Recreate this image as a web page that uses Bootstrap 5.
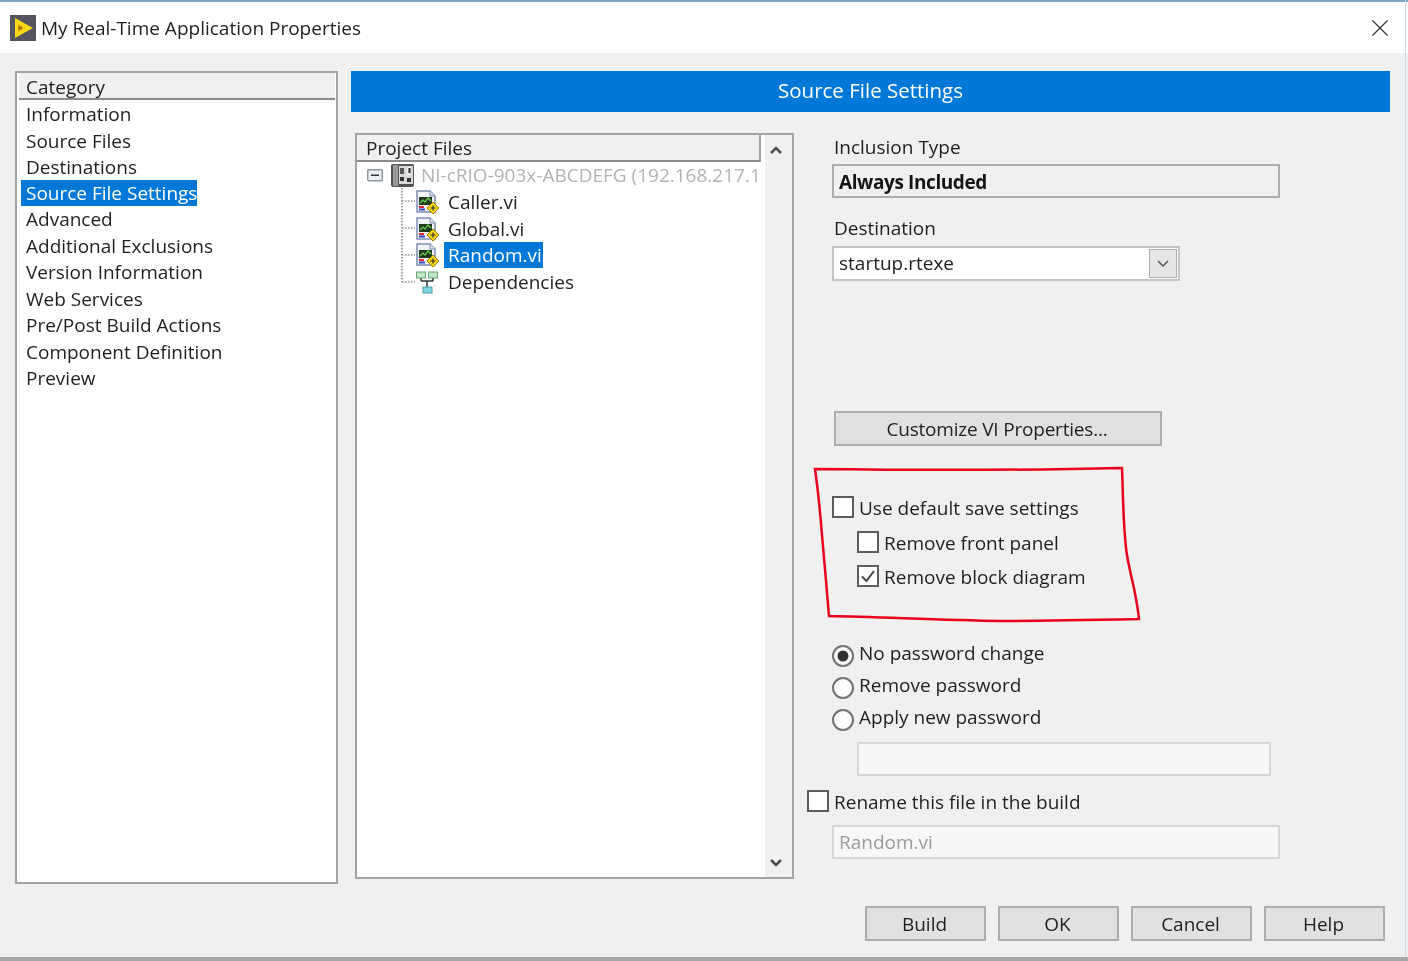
<!DOCTYPE html>
<html lang="en">
<head>
<meta charset="utf-8">
<title>My Real-Time Application Properties</title>
<link href="https://cdn.jsdelivr.net/npm/bootstrap@5.3.0/dist/css/bootstrap.min.css" rel="stylesheet">
<style>
html,body{height:961px;overflow:hidden}
html{background:#f0f0f0}
body{background:#f0f0f0;font-family:"Open Sans","Noto Sans",sans-serif;font-size:19px;line-height:24px;color:#1f1f1f;position:relative;filter:blur(.4px)}
.top-edge{height:2px;background:#7aa7c7}
.title-bar{height:51px;background:#fff;padding-left:10px;padding-right:20px}
.title-bar .ttl{font-size:19px;margin-left:5px}
.app-logo{width:26px;height:26px;flex:none}
.close-x{width:16px;height:16px}
.dlg-main{padding:18px 18px 0 15px;gap:13px}
.cat-list{width:323px;height:813px;background:#fff;border:2px solid #a3a3a3;padding:0 1px 0 2px;border-radius:0;flex:none}
.cat-head{height:27px;background:#f0f0f0;border-bottom:2px solid #8c8c8c;padding-left:7px;line-height:28px;margin:0 0 1px 0}
.cat-list .list-group-item{border:0;background:transparent;padding:0 0 0 7px;height:26.55px;line-height:26.5px;color:#1f1f1f}
.cat-list .list-group-item.active{background:#0078d7;color:#fff;width:176px;margin-left:2px;padding-left:5px;padding-right:0;white-space:nowrap}
.right-col{width:1039px;flex:none}
.blue-head{height:41px;background:#0078d7;color:#fff;font-size:20.500px;padding-bottom:3px}
.panels{margin-top:21px;padding-left:4px}
.tree-box{width:439px;height:746px;background:#fff;border:2px solid #a3a3a3;flex:none}
.tree-main{width:408px;flex:none}
.tree-head{height:27px;background:#f0f0f0;border-bottom:2px solid #8c8c8c;border-right:2px solid #a3a3a3;padding-left:9px;line-height:26px;width:404px}
.tree-rows{position:relative;padding-top:0}
.t-row{height:26.7px;white-space:nowrap;overflow:hidden;width:404px}
.t-root{padding-left:10px;color:#b3b3b3}
.t-child{padding-left:58px}
.t-child svg,.t-root svg{flex:none}
.t-txt{padding:0 1px 0 4px;margin-left:5px;height:26px;line-height:26px}
.t-root .t-txt{margin-left:3px;padding-left:3px}
.t-sel{background:#0078d7;color:#fff}
.t-exp{width:16px;height:16px;margin-right:7px;flex:none}
.t-dots{position:absolute;left:44px;top:26px;width:16px;height:97px;pointer-events:none}
.scroll-col{flex:1;background:#f0f0f0;padding:10px 6px 9px 0}
.scroll-col svg{width:14px;height:10px}
.form-col{margin-left:13px;width:500px}
.sm-label{height:24px;padding-left:27px}
.ro-box{width:448px;height:34px;margin-left:25px;border:2px solid #adadad;padding:0 0 0 5px;font-weight:700;line-height:32px;color:#141414;letter-spacing:-.4px}
.sel-box{width:348px;height:35px;margin-left:25px;background:#fff;border:2px solid #c4c4c4;padding:0 1px 0 5px;line-height:31px}
.sel-drop{width:28px;height:29px;background:#e6e6e6;border:1px solid #adadad}
.gray-btn{background:#e1e1e1;border:2px solid #adadad;border-radius:0;color:#1f1f1f;font-size:19px;line-height:24px;padding:0 2px 0 0}
.gray-btn:hover{background:#e1e1e1;border-color:#adadad;color:#1f1f1f}
.cust-btn{width:328px;height:35px;margin-left:27px;letter-spacing:-.2px}
.opt-row{height:24px;margin-bottom:0;white-space:nowrap}
.opt-txt{margin-top:2px}
.opt-row .form-check-input{width:22px;height:22px;margin:0 5px 0 0;border:2px solid #5c5c5c;border-radius:0;background-color:#fff;flex:none;box-shadow:none}
.opt-row .form-check-input:checked{background-color:#fff;border-color:#5c5c5c;background-image:url("data:image/svg+xml,%3Csvg xmlns='http://www.w3.org/2000/svg' viewBox='0 0 18 18'%3E%3Cpath d='M3 9.500l4.500 4.500 7.500-10' fill='none' stroke='%23444' stroke-width='2'/%3E%3C/svg%3E");background-size:100% 100%}
.opt-row .form-check-input[type=radio]{border-radius:50%;border-color:#707070;margin-top:6px}
.opt-row .form-check-input[type=radio]:checked{background-image:url("data:image/svg+xml,%3Csvg xmlns='http://www.w3.org/2000/svg' viewBox='0 0 18 18'%3E%3Ccircle cx='9' cy='9' r='5.500' fill='%23333'/%3E%3C/svg%3E")}
.lv1{margin-left:25px}
.lv2{margin-left:50px}
.lv0{margin-left:0}
.dis-input.form-control{background:#f7f7f7;border:2px solid #d6d6d6;border-radius:0;height:34px;padding:0 5px;font-size:19px;color:#9a9a9a;line-height:24px;box-shadow:none}
.pw-input{width:414px;margin-left:50px}
.name-input{width:448px;margin-left:25px}
.mt-2px{margin-top:2px}.mt-5px{margin-top:5px}.mt-18px{margin-top:18px}.mt-6px{margin-top:6px}.mt-130px{margin-top:130px}.mt-49px{margin-top:49px}.mt-11px{margin-top:11px}.mt-10px{margin-top:10px}.mt-53px{margin-top:53px}.mt-8px{margin-top:8px}.mt-12px{margin-top:12px}.mt-13px{margin-top:13px}
.dlg-foot{margin-top:22px;padding-right:23px;gap:12px}
.foot-btn{width:121px;height:35px}
.bottom-edge{position:absolute;left:0;right:0;top:957px;height:4px;background:#a6a6a6}
.right-edge{position:absolute;top:0;bottom:4px;right:2px;width:1px;background:#c9dbe8}
.redmark{position:absolute;left:0;top:0;width:1408px;height:961px;pointer-events:none}
</style>
</head>
<body>
<div class="top-edge"></div>
<div class="title-bar d-flex align-items-center justify-content-between">
  <div class="d-flex align-items-center">
    <svg class="app-logo" viewBox="0 0 26 26"><rect width="26" height="26" fill="#55555f"/><path d="M5 3l18 10-18 10z" fill="#f7d916"/><path d="M8 9v8l6-4z" fill="#e2a712"/><circle cx="10" cy="13" r="2" fill="#a8761a"/></svg>
    <span class="ttl">My Real-Time Application Properties</span>
  </div>
  <svg class="close-x" viewBox="0 0 16 16"><path d="M.5.5l15 15M15.500.5l-15 15" stroke="#333" stroke-width="1.200" fill="none"/></svg>
</div>
<div class="dlg-main d-flex">
  <div class="cat-list">
    <div class="cat-head">Category</div>
    <div class="list-group list-group-flush">
      <div class="list-group-item">Information</div>
      <div class="list-group-item">Source Files</div>
      <div class="list-group-item">Destinations</div>
      <div class="list-group-item active">Source File Settings</div>
      <div class="list-group-item">Advanced</div>
      <div class="list-group-item">Additional Exclusions</div>
      <div class="list-group-item">Version Information</div>
      <div class="list-group-item">Web Services</div>
      <div class="list-group-item">Pre/Post Build Actions</div>
      <div class="list-group-item">Component Definition</div>
      <div class="list-group-item">Preview</div>
    </div>
  </div>
  <div class="right-col">
    <div class="blue-head d-flex align-items-center justify-content-center">Source File Settings</div>
    <div class="panels d-flex">
      <div class="tree-box d-flex">
        <div class="tree-main">
          <div class="tree-head">Project Files</div>
          <div class="tree-rows">
            <svg class="t-dots" viewBox="0 0 16 97"><path d="M1 0v94M1 13h13M1 40h13M1 67h13M1 94h13" stroke="#666" stroke-width="1.200" stroke-dasharray="1.500 1.500" fill="none"/></svg>
            <div class="t-row t-root d-flex align-items-center">
              <svg class="t-exp" viewBox="0 0 16 16"><rect x=".75" y="2.750" width="14.500" height="11" fill="#eef0f3" stroke="#8d97a3" stroke-width="1.500" rx="1"/><path d="M4 8.250h8" stroke="#333" stroke-width="1.500"/></svg>
              <svg width="25" height="25" viewBox="0 0 25 25"><rect x="1" y="1" width="23" height="23" rx="2" fill="#555"/><rect x="3" y="2" width="5" height="21" fill="#9a9a9a"/><rect x="9" y="3" width="14" height="18" fill="#d9d9d9"/><rect x="10" y="5" width="4" height="6" fill="#555"/><rect x="17" y="4" width="4" height="8" fill="#f2f2f2"/><rect x="18.500" y="5" width="2" height="5" fill="#222"/><rect x="10" y="14" width="4" height="4" fill="#333"/><rect x="17" y="15" width="4" height="4" fill="#333"/></svg>
              <span class="t-txt">NI-cRIO-903x-ABCDEFG (192.168.217.133)</span>
            </div>
            <div class="t-row t-child d-flex align-items-center"><svg width="24" height="24" viewBox="0 0 24 24"><use href="#vi-ic"/></svg><span class="t-txt">Caller.vi</span></div>
            <div class="t-row t-child d-flex align-items-center"><svg width="24" height="24" viewBox="0 0 24 24"><use href="#vi-ic"/></svg><span class="t-txt">Global.vi</span></div>
            <div class="t-row t-child d-flex align-items-center"><svg width="24" height="24" viewBox="0 0 24 24"><use href="#vi-ic"/></svg><span class="t-txt t-sel">Random.vi</span></div>
            <div class="t-row t-child d-flex align-items-center"><svg width="24" height="24" viewBox="0 0 24 24"><path d="M6 7v4M18 7v4M6 11h12M12 11v8" stroke="#333" stroke-width="1.500" fill="none"/><rect x="1.500" y="2" width="9" height="6" fill="#bfe6c6" stroke="#6aa57a"/><rect x="13.500" y="2" width="9" height="6" fill="#bfe6c6" stroke="#6aa57a"/><rect x="8" y="17" width="9" height="6" fill="#7fd4dc" stroke="#4ea0aa"/></svg><span class="t-txt">Dependencies</span></div>
          </div>
        </div>
        <div class="scroll-col d-flex flex-column align-items-center justify-content-between">
          <svg viewBox="0 0 14 10"><path d="M2 8l5-5 5 5" fill="none" stroke="#4d4d4d" stroke-width="2.500"/></svg>
          <svg viewBox="0 0 14 10"><path d="M2 2l5 5 5-5" fill="none" stroke="#4d4d4d" stroke-width="2.500"/></svg>
        </div>
      </div>
      <div class="form-col">
        <div class="sm-label mt-2px">Inclusion Type</div>
        <div class="ro-box mt-5px">Always Included</div>
        <div class="sm-label mt-18px">Destination</div>
        <div class="sel-box mt-6px d-flex align-items-center justify-content-between">
          <span>startup.rtexe</span>
          <span class="sel-drop d-flex align-items-center justify-content-center"><svg width="14" height="10" viewBox="0 0 14 10"><path d="M2 2l5 5 5-5" fill="none" stroke="#555" stroke-width="1.500"/></svg></span>
        </div>
        <button type="button" class="btn gray-btn cust-btn d-block mt-130px">Customize VI Properties...</button>
        <label class="opt-row lv1 d-flex align-items-center mt-49px"><input class="form-check-input" type="checkbox"><span class="opt-txt">Use default save settings</span></label>
        <label class="opt-row lv2 d-flex align-items-center mt-11px"><input class="form-check-input" type="checkbox"><span class="opt-txt">Remove front panel</span></label>
        <label class="opt-row lv2 d-flex align-items-center mt-10px"><input class="form-check-input" type="checkbox" checked><span class="opt-txt">Remove block diagram</span></label>
        <label class="opt-row lv1 d-flex align-items-center mt-53px"><input class="form-check-input" type="radio" name="pw" checked>No password change</label>
        <label class="opt-row lv1 d-flex align-items-center mt-8px"><input class="form-check-input" type="radio" name="pw">Remove password</label>
        <label class="opt-row lv1 d-flex align-items-center mt-8px"><input class="form-check-input" type="radio" name="pw">Apply new password</label>
        <input class="form-control dis-input pw-input mt-13px" type="text" disabled>
        <label class="opt-row lv0 d-flex align-items-center mt-13px"><input class="form-check-input" type="checkbox"><span class="opt-txt">Rename this file in the build</span></label>
        <input class="form-control dis-input name-input mt-12px" type="text" value="Random.vi" disabled>
      </div>
    </div>
  </div>
</div>
<div class="dlg-foot d-flex justify-content-end">
  <button type="button" class="btn gray-btn foot-btn">Build</button>
  <button type="button" class="btn gray-btn foot-btn">OK</button>
  <button type="button" class="btn gray-btn foot-btn">Cancel</button>
  <button type="button" class="btn gray-btn foot-btn">Help</button>
</div>
<div class="bottom-edge"></div>
<div class="right-edge"></div>
<svg class="redmark" viewBox="0 0 1408 961"><path d="M815 469C900 470 1040 470 1122 468C1123 490 1123 530 1127 555C1130 575 1136 590 1139 619C1090 620 1040 621 1000 621C940 620 880 617 829 616C827 590 824 560 822 535C820 510 818 490 815 469Z" fill="none" stroke="#e8001c" stroke-width="2.500"/></svg>
<svg width="0" height="0" class="position-absolute"><defs><g id="vi-ic"><path d="M2 1h13l5 5v16H2z" fill="#f2f4f8" stroke="#7d8cb5" stroke-width="1.500"/><path d="M15 1v5h5" fill="#dfe4ef" stroke="#7d8cb5"/><rect x="4" y="7" width="13" height="8" fill="#1f3a1f"/><path d="M5 13l3-3 2 2 3-4 3 3" stroke="#6fd04f" fill="none" stroke-width="1.200"/><rect x="4" y="16" width="5" height="2" fill="#d23"/><rect x="4" y="18.500" width="6" height="2" fill="#34c"/><path d="M18 12l6 6-6 6-6-6z" fill="#f7d516" stroke="#9c7c00"/><path d="M15.500 18h5M18 15.500v5" stroke="#333" stroke-width="1.200"/></g></defs></svg>
<script src="https://cdn.jsdelivr.net/npm/bootstrap@5.3.0/dist/js/bootstrap.bundle.min.js"></script>
</body>
</html>
